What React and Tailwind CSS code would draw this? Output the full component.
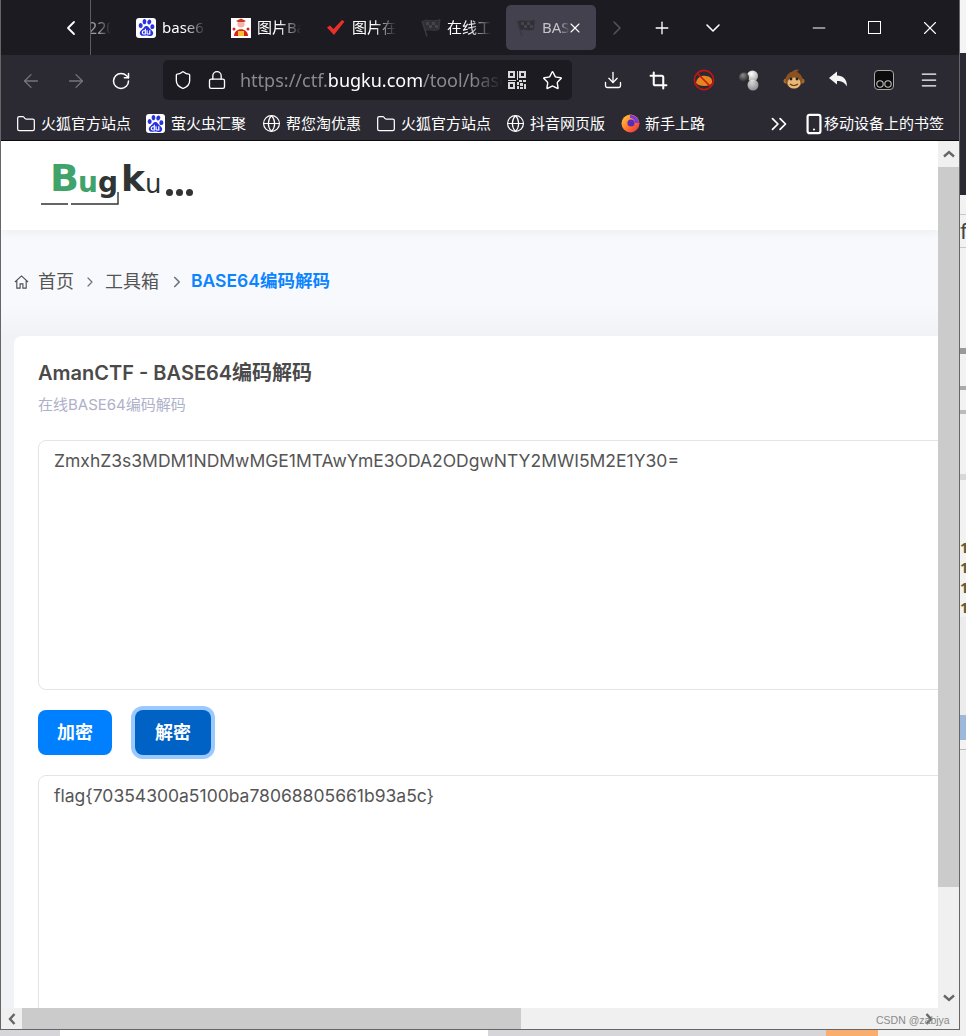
import {
  ArrowLeft,
  ArrowRight,
  ChevronDown,
  ChevronLeft,
  ChevronRight,
  ChevronsRight,
  Crop,
  Download,
  Folder,
  Globe,
  Lock,
  Menu,
  Minus,
  Plus,
  RotateCw,
  Shield,
  Smartphone,
  Star,
  X,
} from "lucide-react";
import { SiBaidu } from "react-icons/si";

const BaiduIcon = ({ size = "w-5 h-5" }) => (
  <span className={`${size} shrink-0 rounded-[3px] bg-white flex items-center justify-center text-[#2932e1]`}>
    <SiBaidu size={17} />
  </span>
);

const PigIcon = () => (
  <svg width="20" height="20" viewBox="0 0 20 20" className="shrink-0">
    <rect width="20" height="20" fill="#fff" />
    <circle cx="10" cy="6" r="3.6" fill="#f3b4a8" />
    <path d="M5 3 L10 0.5 L15 3 L13 4 H7 Z" fill="#c9382c" />
    <path d="M3 18 C3 9 17 9 17 18 Z" fill="#d8231c" />
    <rect x="7" y="13" width="6" height="5" fill="#f2c230" />
    <circle cx="3" cy="11" r="1.5" fill="#d8231c" />
    <circle cx="17" cy="11" r="1.5" fill="#d8231c" />
  </svg>
);

const CheckIcon = () => (
  <svg width="20" height="20" viewBox="0 0 20 20" className="shrink-0">
    <path d="M1 9.5 L4 7.5 L7.5 11 L16 2 L18.5 3.5 L8 17 Z" fill="#e8302a" />
  </svg>
);

// checkered flag, tilted like the default tab icon
const FlagIcon = () => (
  <svg width="20" height="20" viewBox="0 0 20 20" className="shrink-0">
    <path d="M1 3 L6 18.5" stroke="#3a3940" strokeWidth="1.4" />
    <path d="M1.5 3.5 C6 0 10 5 19 1.5 L18 11.5 C11 14 8 10 4.5 13 Z" fill="#302f36" stroke="#3f3e46" strokeWidth="0.8" />
    <path d="M5 4 h3 v3 h-3z M11 4 h3 v3 h-3z M8 7 h3 v3 h-3z M14 7 h3 v3 h-3z" fill="#45444c" />
  </svg>
);

const FoxIcon = () => (
  <svg width="19" height="19" viewBox="0 0 19 19" className="shrink-0">
    <defs>
      <linearGradient id="fox" x1="0" y1="0" x2="1" y2="1">
        <stop offset="0" stopColor="#ffd33d" />
        <stop offset="0.6" stopColor="#ff6a2b" />
        <stop offset="1" stopColor="#e0245e" />
      </linearGradient>
    </defs>
    <circle cx="9.5" cy="9.5" r="9" fill="url(#fox)" />
    <path d="M9 1 A8.5 8.5 0 0 1 18 9 L14 9 A5 5 0 0 0 9 4 Z" fill="#7a3ce0" />
    <circle cx="10" cy="9" r="3.6" fill="#5a2bb8" />
  </svg>
);

const tabs = [
  { icon: <BaiduIcon />, label: "base6" },
  { icon: <PigIcon />, label: "图片Ba" },
  { icon: <CheckIcon />, label: "图片在" },
  { icon: <FlagIcon />, label: "在线工" },
];

const bookmarks = [
  { icon: <Folder size={20} strokeWidth={1.5} />, label: "火狐官方站点", w: "w-[130px]" },
  { icon: <BaiduIcon size="w-[19px] h-[19px] mr-[1px]" />, label: "萤火虫汇聚", w: "w-[116px]" },
  { icon: <Globe size={19} strokeWidth={1.5} />, label: "帮您淘优惠", w: "w-[114px]" },
  { icon: <Folder size={20} strokeWidth={1.5} />, label: "火狐官方站点", w: "w-[130px]" },
  { icon: <Globe size={19} strokeWidth={1.5} />, label: "抖音网页版", w: "w-[115px]" },
  { icon: <FoxIcon />, label: "新手上路", w: "w-[147px]" },
];

const ExtBlocked = () => (
  <svg width="22" height="22" viewBox="0 0 22 22">
    <path d="M3 14 C4 8 9 6 13 7 C17 7 20 10 19 14 C17 18 6 18 3 14 Z" fill="#e8841c" />
    <circle cx="11" cy="11" r="9.6" fill="none" stroke="#c81414" strokeWidth="1.6" />
    <path d="M4.5 4.5 L17.5 17.5" stroke="#c81414" strokeWidth="1.6" />
  </svg>
);

const ExtBalls = () => (
  <svg width="22" height="22" viewBox="0 0 22 22">
    <defs>
      <radialGradient id="ballLight" cx="0.4" cy="0.3" r="0.8">
        <stop offset="0" stopColor="#fff" />
        <stop offset="1" stopColor="#9c9c9c" />
      </radialGradient>
      <radialGradient id="ballDark" cx="0.4" cy="0.3" r="0.8">
        <stop offset="0" stopColor="#8a8a8a" />
        <stop offset="1" stopColor="#111" />
      </radialGradient>
    </defs>
    <circle cx="14.5" cy="7" r="5.5" fill="url(#ballLight)" />
    <circle cx="15" cy="16" r="5.5" fill="url(#ballLight)" opacity="0.8" />
    <circle cx="6" cy="8.5" r="5" fill="url(#ballDark)" />
  </svg>
);

const ExtMonkey = () => (
  <svg width="22" height="22" viewBox="0 0 22 22">
    <circle cx="3" cy="12" r="2.5" fill="#a86a2c" />
    <circle cx="19" cy="12" r="2.5" fill="#a86a2c" />
    <path d="M9 3 C11 0 15 0 16 1 C14 2 14 3 14 4 Z" fill="#8a5220" />
    <circle cx="11" cy="11" r="8.5" fill="#8a5220" />
    <ellipse cx="11" cy="14" rx="6.5" ry="5.5" fill="#e8b878" />
    <circle cx="8" cy="10" r="1.4" fill="#222" />
    <circle cx="14" cy="10" r="1.4" fill="#222" />
    <path d="M7 15 Q11 18 15 15" stroke="#6a3a14" strokeWidth="1.2" fill="none" />
  </svg>
);

const ExtUndo = () => (
  <svg width="22" height="22" viewBox="0 0 22 22">
    <path d="M1 9 L9 2.5 L9 6.5 C15 6.5 19 10 19 17.5 C16.5 13.5 14 12 9 12 L9 15.5 Z" fill="#f4f4f4" />
  </svg>
);

const ExtGlasses = () => (
  <svg width="20" height="20" viewBox="0 0 20 20">
    <rect x="0.5" y="0.5" width="19" height="19" rx="3.5" fill="#0c0c0c" stroke="#a8a8a8" />
    <circle cx="6" cy="14" r="3.2" fill="none" stroke="#c0c0c0" strokeWidth="1.1" />
    <circle cx="14" cy="14" r="3.2" fill="none" stroke="#c0c0c0" strokeWidth="1.1" />
  </svg>
);

const TabBar = () => (
  <div className="h-[55px] shrink-0 bg-[#1c1b22] flex items-start relative">
    <div className="w-[89px] h-full flex items-center justify-end pr-[7px] text-white">
      <ChevronLeft size={24} strokeWidth={1.8} />
    </div>
    <div className="w-[36px] h-full border-l border-[#5c5b62] overflow-hidden flex items-center text-[16px] text-[#9a9aa0] [mask-image:linear-gradient(to_right,#000_25%,transparent_58%)]">
      <span className="-ml-[3px]">220</span>
    </div>
    <div className="flex gap-[5px] pt-[5px]">
      {tabs.map((tab) => (
        <div key={tab.label} className="w-[90px] h-[45px] pl-[10px] flex items-center gap-[6px] text-white text-[15px]">
          {tab.icon}
          <span className="w-[44px] overflow-hidden whitespace-nowrap [mask-image:linear-gradient(to_right,#000_50%,transparent_100%)]">
            {tab.label}
          </span>
        </div>
      ))}
      <div className="w-[90px] h-[45px] pl-[10px] flex items-center gap-[6px] rounded-[5px] bg-[#42414d] text-white text-[15px] relative">
        <FlagIcon />
        <span className="w-[28px] overflow-hidden whitespace-nowrap text-[#c4c4c8] [mask-image:linear-gradient(to_right,#000_60%,transparent_100%)]">
          BASE
        </span>
        <X size={16} strokeWidth={1.6} className="absolute left-[61px] text-white" />
      </div>
    </div>
    <div className="flex items-center h-full ml-[9px] text-white">
      <ChevronRight size={24} strokeWidth={1.5} className="text-[#55545c]" />
      <Plus size={20} strokeWidth={1.6} className="ml-[23px]" />
      <ChevronDown size={24} strokeWidth={1.6} className="ml-[29px]" />
      <Minus size={20} strokeWidth={1.2} className="ml-[84px]" />
      <div className="ml-[39px] w-[13px] h-[13px] border border-white" />
      <X size={22} strokeWidth={1.2} className="ml-[38px]" />
    </div>
  </div>
);

const NavBar = () => (
  <div className="h-[52px] shrink-0 bg-[#2b2a33] flex items-center text-white pl-[19px]">
    <ArrowLeft size={22} strokeWidth={1.4} className="text-[#77767d]" />
    <ArrowRight size={22} strokeWidth={1.4} className="ml-[23px] text-[#77767d]" />
    <RotateCw size={20} strokeWidth={1.8} className="ml-[24px]" />
    <div className="ml-[32px] w-[409px] h-[40px] -mt-[2px] rounded-[5px] bg-[#1c1b22] flex items-center pl-[10px]">
      <Shield size={20} strokeWidth={1.6} />
      <Lock size={20} strokeWidth={1.6} className="ml-[14px]" />
      <span className="ml-[13px] w-[263px] overflow-hidden whitespace-nowrap text-[18px] text-[#8b8a90] [mask-image:linear-gradient(to_right,#000_88%,transparent_100%)]">
        https://ctf.<span className="text-white">bugku.com</span>/tool/base64
      </span>
      <svg width="18" height="18" viewBox="0 0 18 18" className="ml-[5px] text-[#d8d8d8]" fill="currentColor">
        <path d="M0 0h7v7H0zM2 2v3h3V2zM11 0h7v7h-7zM13 2v3h3V2zM0 11h7v7H0zM2 13v3h3v-3zM9 0h1v9H9zM0 9h8v1H0zM11 9h3v2h-3zM15 9h3v2h-3zM9 11h2v3H9zM12 12h3v3h-3zM16 13h2v5h-2zM9 15h2v3H9zM12 16h3v2h-3z" />
      </svg>
      <Star size={21} strokeWidth={1.6} className="ml-[16px]" />
    </div>
    <div className="flex items-center -mt-[2px]">
      <Download size={20} strokeWidth={1.6} className="ml-[31px]" />
      <Crop size={19} strokeWidth={2.6} className="ml-[26px]" />
      <span className="ml-[25px]"><ExtBlocked /></span>
      <span className="ml-[23px]"><ExtBalls /></span>
      <span className="ml-[23px]"><ExtMonkey /></span>
      <span className="ml-[23px]"><ExtUndo /></span>
      <span className="ml-[24px]"><ExtGlasses /></span>
      <Menu size={20} strokeWidth={1.5} className="ml-[25px]" />
    </div>
  </div>
);

const BookmarkBar = () => (
  <div className="h-[34px] shrink-0 bg-[#2b2a33] flex items-center pl-[15px] text-white text-[15px] border-b border-[#0c0c0d]">
    {bookmarks.map((item, i) => (
      <div key={i} className={`${item.w} flex items-center gap-[5px] whitespace-nowrap`}>
        {item.icon}
        <span>{item.label}</span>
      </div>
    ))}
    <ChevronsRight size={26} strokeWidth={1.6} className="-ml-[2px]" />
    <div className="ml-[12px] flex items-center whitespace-nowrap">
      <Smartphone size={22} strokeWidth={2.4} className="-mx-[1px]" />
      <span>移动设备上的书签</span>
    </div>
  </div>
);

const Logo = () => (
  <div className="relative w-[160px] h-[40px] font-['DejaVu_Sans',sans-serif] leading-none whitespace-nowrap">
    <div className="flex items-end h-[30px] pl-[9px]">
      <span className="text-[38px] font-bold text-[#3fa36a] tracking-[-1px]">B</span>
      <span className="text-[28px] font-bold text-[#3fa36a]">u</span>
      <span className="text-[28px] font-bold text-[#2f3435]">g</span>
      <span className="text-[36px] font-bold text-[#2f3435] ml-[3px]">k</span>
      <span className="text-[26px] text-[#2f3435]">u</span>
      <span className="ml-[5px] mb-[1px] flex gap-[3px]">
        <span className="w-[7px] h-[7px] rounded-full bg-[#333]" />
        <span className="w-[7px] h-[7px] rounded-full bg-[#333]" />
        <span className="w-[7px] h-[7px] rounded-full bg-[#333]" />
      </span>
    </div>
    <svg width="80" height="18" className="absolute left-0 top-[23px]">
      <path d="M0 14 H27 M30 14 H77 V2" stroke="#333" strokeWidth="1.4" fill="none" />
    </svg>
  </div>
);

const Breadcrumb = () => (
  <div className="h-[106px] pl-[13px] pb-[3px] flex items-center text-[18px] text-[#555] bg-linear-to-b from-[#f8f9fc] via-[#f8f9fc] via-70% to-[#f1f2f5]">
    <svg width="15" height="16" viewBox="0 0 16 16" fill="none" stroke="#4a4f55" strokeWidth="1.2">
      <path d="M1 8 L8 1.5 L15 8 M3 6.5 V14.5 H6.5 V10 H9.5 V14.5 H13 V6.5" />
    </svg>
    <span className="ml-[9px]">首页</span>
    <ChevronRight size={16} strokeWidth={1.8} className="ml-[8px] text-[#6b7280]" />
    <span className="ml-[7px]">工具箱</span>
    <ChevronRight size={18} strokeWidth={2.2} className="ml-[9px] text-[#6b7280]" />
    <span className="ml-[5px] text-[17.5px] font-semibold text-[#0a84ff]">BASE64编码解码</span>
  </div>
);

const Card = () => (
  <div className="ml-[13px] w-[1000px] rounded-t-lg bg-white pt-[24px] pl-[24px] pr-[24px]">
    <h1 className="text-[20px] leading-[26px] font-semibold text-[#4a4a4a]">AmanCTF - BASE64编码解码</h1>
    <p className="mt-[9px] text-[15px] leading-[20px] text-[#aeb1c9]">在线BASE64编码解码</p>
    <textarea
      readOnly
      className="mt-[25px] block w-full h-[250px] resize-none outline-none rounded-lg border border-[#e2e5e8] bg-white px-[15px] py-[10px] text-[17.5px] leading-[20px] text-[#555]"
      value="ZmxhZ3s3MDM1NDMwMGE1MTAwYmE3ODA2ODgwNTY2MWI5M2E1Y30="
    />
    <div className="mt-[20px] flex gap-[23px]">
      <button className="w-[74px] h-[45px] rounded-lg bg-[#0080ff] text-white text-[18px] font-bold">加密</button>
      <button className="w-[76px] h-[45px] rounded-lg bg-[#0062c4] text-white text-[18px] font-bold ring-[4px] ring-[#99c9ff]">解密</button>
    </div>
    <textarea
      readOnly
      className="mt-[20px] block w-full h-[250px] resize-none outline-none rounded-lg border border-[#e2e5e8] bg-white px-[15px] py-[10px] text-[17.5px] leading-[20px] text-[#555]"
      value="flag{70354300a5100ba78068805661b93a5c}"
    />
  </div>
);

const Page = () => (
  <div className="flex-1 min-h-0 flex">
    <div className="w-[937px] overflow-hidden bg-[#f1f2f5] font-['Inter','Noto_Sans_CJK_SC',sans-serif]">
      <header className="h-[89px] bg-white pl-[40px] pt-[26px] shadow-[0_2px_10px_rgba(0,0,0,0.05)] relative z-10">
        <Logo />
      </header>
      <Breadcrumb />
      <Card />
    </div>
    {/* vertical scrollbar */}
    <div className="w-[21px] bg-[#f0f0f0] flex flex-col text-[#666]">
      <div className="h-[26px] flex items-center justify-center">
        <svg width="12" height="8" viewBox="0 0 12 8"><path d="M1 6.5 L6 2 L11 6.5" fill="none" stroke="currentColor" strokeWidth="2.4" /></svg>
      </div>
      <div className="h-[720px] bg-[#cbcbcb]" />
      <div className="flex-1 flex items-end justify-center pb-[6px]">
        <svg width="12" height="8" viewBox="0 0 12 8"><path d="M1 1.5 L6 6 L11 1.5" fill="none" stroke="currentColor" strokeWidth="2.4" /></svg>
      </div>
    </div>
  </div>
);

const HorizontalScrollbar = () => (
  <div className="h-[21px] shrink-0 bg-[#f0f0f0] flex items-center text-[#666]">
    <div className="w-[21px] flex justify-center">
      <svg width="8" height="12" viewBox="0 0 8 12"><path d="M6.5 1 L2 6 L6.5 11" fill="none" stroke="currentColor" strokeWidth="2.4" /></svg>
    </div>
    <div className="w-[499px] h-full bg-[#cbcbcb]" />
    <div className="flex-1 flex justify-end pr-[26px]">
      <svg width="8" height="12" viewBox="0 0 8 12"><path d="M1.5 1 L6 6 L1.5 11" fill="none" stroke="currentColor" strokeWidth="2.4" /></svg>
    </div>
  </div>
);

// the sliver of another window that shows right of this one
const BehindWindow = () => (
  <div className="flex-1 flex flex-col overflow-hidden bg-[#f2f2f2]">
    <div className="h-[53px] shrink-0 bg-[#f4f4f4]" />
    <div className="h-[142px] shrink-0 bg-[#2b2a33]" />
    <div className="h-[20px] shrink-0 border-b border-[#c8c8c8]" />
    <div className="h-[33px] shrink-0 border-b border-[#c8c8c8] text-[22px] leading-[30px] text-[#444]">f</div>
    <div className="h-[100px] shrink-0" />
    <div className="h-[6px] shrink-0 bg-[#9a9a9a]" />
    <div className="h-[32px] shrink-0" />
    <div className="h-[4px] shrink-0 bg-[#aaa]" />
    <div className="h-[20px] shrink-0" />
    <div className="h-[4px] shrink-0 bg-[#bbb]" />
    <div className="h-[60px] shrink-0" />
    <div className="h-[6px] shrink-0 bg-[#d8d8d8]" />
    <div className="h-[57px] shrink-0" />
    <div className="h-[80px] shrink-0 text-[15px] leading-[20px] text-[#6a5a30] font-bold">
      <div>1</div>
      <div>1</div>
      <div>1</div>
      <div>1</div>
    </div>
    <div className="h-[98px] shrink-0 bg-[#ececec]" />
    <div className="h-[25px] shrink-0 bg-[#9db8d8]" />
    <div className="h-[10px] shrink-0 border-b border-[#bbb]" />
    <div className="flex-1 bg-[#f0f0f0]" />
  </div>
);

const App = () => {
  return (
    <div className="relative w-[966px] h-[1036px] overflow-hidden bg-[#dcdcdf] flex flex-col font-['Noto_Sans','Noto_Sans_CJK_SC',sans-serif]">
      <div className="flex h-[1030px] shrink-0">
        <div className="w-[960px] flex flex-col border-l border-r border-b border-[#666] bg-white">
          <TabBar />
          <NavBar />
          <BookmarkBar />
          <Page />
          <HorizontalScrollbar />
        </div>
        <BehindWindow />
      </div>
      <div className="h-[6px] flex">
        <div className="w-[60px] bg-[#d6d6da]" />
        <div className="w-[428px] bg-white" />
        <div className="w-[338px] bg-[#d6d6da]" />
        <div className="w-[52px] bg-[#f9ad6f]" />
        <div className="flex-1 bg-[#f0f0f0]" />
      </div>
      <span className="absolute left-[876px] top-[1013px] text-[10.5px] text-[#8a8a8a] font-['Liberation_Sans',sans-serif]">CSDN @zabjya</span>
    </div>
  );
};

export default App;
